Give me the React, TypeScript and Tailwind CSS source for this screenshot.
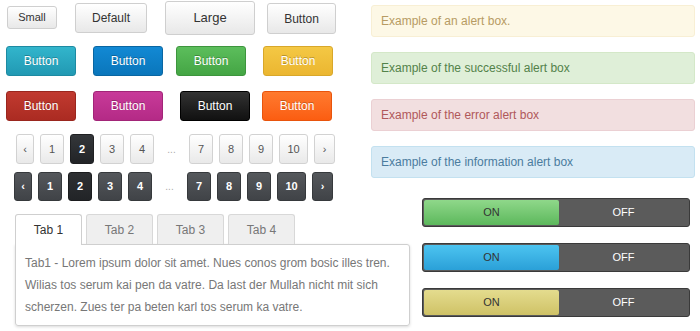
import React from "react";

const font = { fontFamily: '"Liberation Sans", Arial, sans-serif' };

const colorButtons: { label: string; cls: string }[][] = [
  [
    { label: "Button", cls: "ml-[6px] bg-gradient-to-b from-[#32b5cc] to-[#2199b3] border-[#1d8aa2]" },
    { label: "Button", cls: "ml-[17px] bg-gradient-to-b from-[#1289d4] to-[#0a76bb] border-[#0966a2]" },
    { label: "Button", cls: "ml-[13px] bg-gradient-to-b from-[#5cbe5c] to-[#44a544] border-[#3d953d]" },
    { label: "Button", cls: "ml-[17px] bg-gradient-to-b from-[#f4c844] to-[#ebb630] border-[#d8a72a]" },
  ],
  [
    { label: "Button", cls: "ml-[6px] bg-gradient-to-b from-[#c13a30] to-[#ab2b22] border-[#9a261e]" },
    { label: "Button", cls: "ml-[17px] bg-gradient-to-b from-[#c83a99] to-[#b42a86] border-[#a22578]" },
    { label: "Button", cls: "ml-[17px] bg-gradient-to-b from-[#333] to-[#111] border-[#000]" },
    { label: "Button", cls: "ml-[12px] bg-gradient-to-b from-[#ff7a2e] to-[#fb5d10] border-[#e8540c]" },
  ],
];

const pages = ["‹", "1", "2", "3", "4", "…", "7", "8", "9", "10", "›"];

function Pager({ dark }: { dark: boolean }) {
  return (
    <div className={`flex items-center ${dark ? "ml-[14px] h-[29px]" : "ml-[16px] h-[30px]"}`}>
      {pages.map((p, i) => {
        if (p === "…") {
          return (
            <span key={i} className="w-[35px] text-center text-[10px] text-[#aaa]">
              ...
            </span>
          );
        }
        const w = p === "10" ? "w-[29px]" : p === "‹" ? "w-[18px]" : p === "›" ? "w-[21px]" : "w-[24px]";
        const active = p === "2";
        let tone = "";
        if (dark) {
          tone = active
            ? "bg-gradient-to-b from-[#2e3033] to-[#222427] border-[#1b1c1e] text-white"
            : "bg-gradient-to-b from-[#55585c] to-[#404347] border-[#36393c] text-white";
        } else {
          tone = active
            ? "bg-gradient-to-b from-[#34373a] to-[#222427] border-[#1f2022] text-white"
            : "bg-gradient-to-b from-white to-[#e9e9e9] border-[#d2d2d2] text-[#555]";
        }
        const next = pages[i + 1];
        const mr = next === "…" || i === pages.length - 1 ? "" : "mr-[6px]";
        return (
          <div
            key={i}
            className={`${w} ${mr} h-full flex items-center justify-center rounded-[3px] border text-[11px] ${
              dark || active ? "font-bold" : ""
            } ${tone}`}
          >
            {p}
          </div>
        );
      })}
    </div>
  );
}

const alerts = [
  { text: "Example of an alert box.", cls: "bg-[#fdf8e6] border-[#f8efd4] text-[#b79b63]" },
  { text: "Example of the successful alert box", cls: "bg-[#dfefd8] border-[#d4e8c8] text-[#53824a]" },
  { text: "Example of the error alert box", cls: "bg-[#f2dfe0] border-[#ebd0d3] text-[#b0585a]" },
  { text: "Example of the information alert box", cls: "bg-[#d9ebf6] border-[#c3e1f0] text-[#4b7c9e]" },
];

const toggles = [
  "bg-gradient-to-b from-[#8fd88a] to-[#5cb85c]",
  "bg-gradient-to-b from-[#4cc4f0] to-[#2aa0d8]",
  "bg-gradient-to-b from-[#e4dc8e] to-[#cfc266]",
];

export default function App() {
  return (
    <div className="w-[700px] h-[331px] bg-white overflow-hidden flex" style={font}>
      <div className="w-[371px] shrink-0 flex flex-col">
        <div className="flex items-center h-[35px]">
          <button className="ml-[7px] w-[50px] h-[23px] rounded-[3px] border border-[#cfcfcf] bg-gradient-to-b from-white to-[#e8e8e8] text-[11px] text-[#333]">
            Small
          </button>
          <button className="ml-[18px] w-[72px] h-[30px] rounded-[3px] border border-[#cfcfcf] bg-gradient-to-b from-white to-[#e8e8e8] text-[12px] text-[#333]">
            Default
          </button>
          <button className="ml-[18px] w-[90px] h-[34px] rounded-[3px] border border-[#cfcfcf] bg-gradient-to-b from-white to-[#e8e8e8] text-[13px] text-[#333]">
            Large
          </button>
          <button className="ml-[12px] mt-[2px] w-[69px] h-[31px] rounded-[3px] border border-[#cfcfcf] bg-gradient-to-b from-white to-[#e8e8e8] text-[12px] text-[#333]">
            Button
          </button>
        </div>
        <div className="flex flex-col gap-[15px] mt-[11px]">
          {colorButtons.map((row, r) => (
            <div key={r} className="flex h-[30px]">
              {row.map((b, i) => (
                <button
                  key={i}
                  className={`${b.cls} w-[70px] h-full rounded-[3px] border text-[12px] text-white [text-shadow:0_-1px_0_rgba(0,0,0,0.25)]`}
                >
                  {b.label}
                </button>
              ))}
            </div>
          ))}
        </div>
        <div className="mt-[13px] flex flex-col gap-[8px]">
          <Pager dark={false} />
          <Pager dark={true} />
        </div>
        <div className="ml-[15px] mt-[13px] w-[395px]">
          <div className="flex gap-[4px] h-[30px]">
            {["Tab 1", "Tab 2", "Tab 3", "Tab 4"].map((t, i) => (
              <div
                key={t}
                className={`w-[67px] flex items-center justify-center rounded-t-[3px] border border-b-0 text-[12px] ${
                  i === 0
                    ? "bg-white border-[#cfcfcf] text-[#333] relative z-10 h-[31px]"
                    : "bg-[#efefef] border-[#d8d8d8] text-[#777] h-[30px]"
                }`}
              >
                {t}
              </div>
            ))}
          </div>
          <div className="h-[82px] border border-[#cfcfcf] rounded-b-[3px] rounded-tr-[3px] shadow-[0_1px_3px_rgba(0,0,0,0.15)] pl-[9px] pr-[2px] pt-[7px] text-[12px] leading-[22px] text-[#777]">
            Tab1 - Lorem ipsum dolor sit amet. Nues conos grom bosic illes tren. Wilias tos serum kai pen da vatre. Da last der Mullah nicht mit sich scherzen. Zues ter pa beten karl tos serum ka vatre.
          </div>
        </div>
      </div>
      <div className="flex-1 flex flex-col pr-[5px]">
        <div className="mt-[5px] flex flex-col gap-[15px]">
          {alerts.map((a) => (
            <div
              key={a.text}
              className={`${a.cls} h-[32px] border rounded-[3px] flex items-center pl-[9px] text-[12px]`}
            >
              {a.text}
            </div>
          ))}
        </div>
        <div className="mt-[20px] ml-[51px] flex flex-col gap-[16px]">
          {toggles.map((c, i) => (
            <div
              key={i}
              className="w-[268px] h-[29px] rounded-[3px] border border-[#3a3a3a] bg-[#5b5b5b] flex p-[1px] text-[11px]"
            >
              <div className={`${c} w-[135px] rounded-[2px] flex items-center justify-center text-[#333]`}>ON</div>
              <div className="flex-1 flex items-center justify-center text-white">OFF</div>
            </div>
          ))}
        </div>
      </div>
    </div>
  );
}
